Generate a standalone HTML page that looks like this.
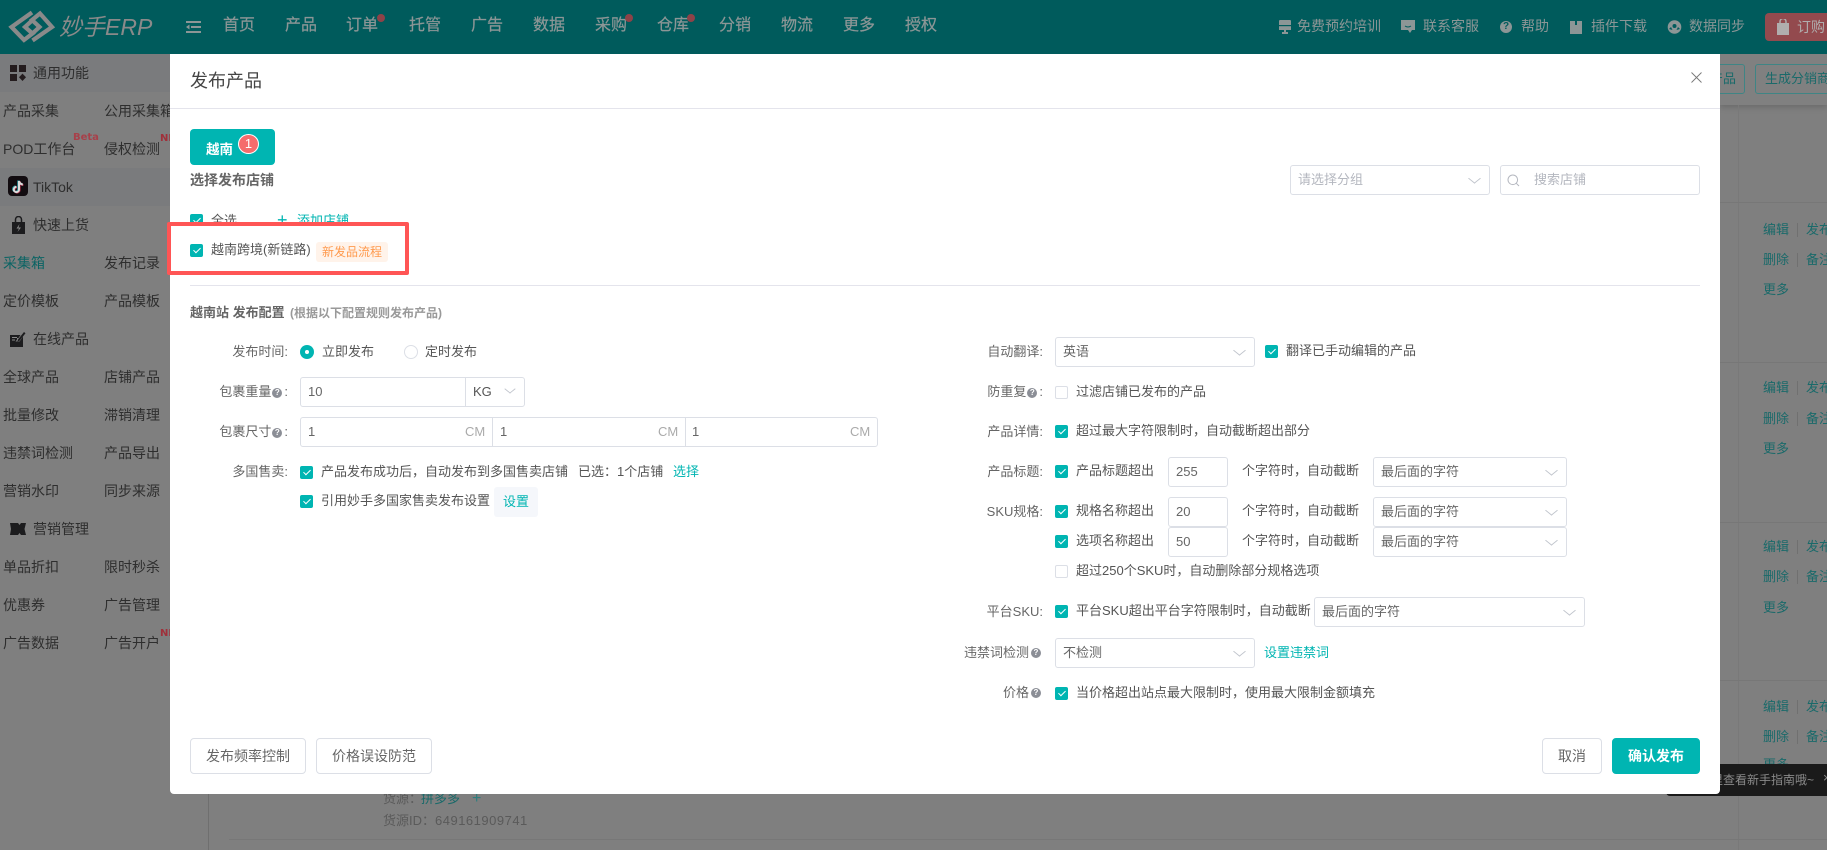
<!DOCTYPE html>
<html lang="zh"><head><meta charset="utf-8"><title>发布产品</title>
<style>
*{box-sizing:border-box}
html,body{margin:0;padding:0;width:1827px;height:850px;overflow:hidden;background:#7f7f7f;font-family:"Liberation Sans","Noto Sans CJK SC",sans-serif;font-size:13px;color:#606266}
div,span.a{position:absolute}
.t{height:20px;line-height:20px;white-space:nowrap}
.top{position:absolute;left:0;top:0;width:1827px;height:54px;background:#005b5c}
.n{font-size:16px;color:#8c9696;top:16px;-webkit-text-stroke:.2px #8c9696}
.tr{font-size:14px;color:#8c9696;top:16px}
.s{font-size:14px;color:#2e2e2e}
.band{left:0;width:170px;height:38px;background:#7a7b7d}
.act{font-size:13px;color:#1a6a6a}
.m{left:170px;top:54px;width:1550px;height:740px;background:#fff;border-radius:0 0 4px 4px}
.hr{height:1px;background:#e4e4ec}
.l{color:#666;text-align:right;font-size:13px}
.x{color:#555;font-size:13px}
.cb{width:13px;height:13px;background:#00b5b2;border-radius:2px}
.cb:after{content:"";position:absolute;left:4.5px;top:2px;width:3px;height:6px;border:solid #fff;border-width:0 1px 1px 0;transform:rotate(45deg)}
.ck{width:13px;height:13px;background:#fff;border:1px solid #dcdfe6;border-radius:2px}
.in{border:1px solid #dcdfe6;border-radius:3px;background:#fff;height:30px;line-height:28px;padding-left:7px;color:#666;font-size:13px;white-space:nowrap}
.sel:after{content:"";position:absolute;right:10px;top:8px;width:8px;height:8px;border:solid #c0c4cc;border-width:0 1px 1px 0;transform:scaleY(.8) rotate(45deg)}
.g{color:#b4b7bf}
.btn{border:1px solid #dcdfe6;border-radius:4px;background:#fff;height:36px;line-height:34px;text-align:center;color:#666;font-size:14px}
.q{width:10px;height:10px;border-radius:50%;background:#8b8e96;color:#fff;font-size:8px;line-height:10px;text-align:center;font-weight:bold}
.il{display:inline-block;position:relative;vertical-align:1px;margin:0 2px 0 1px}
.link{color:#00b5b2}
.bd{font-family:"DejaVu Sans",sans-serif;font-weight:bold;font-size:10px;line-height:14px;height:14px;white-space:nowrap}
</style></head><body>

<!-- background -->
<div style="left:1720px;top:54px;width:107px;height:51px;background:#808080;box-shadow:0 2px 6px rgba(0,0,0,.18)"></div>
<div style="left:1700px;top:64px;width:45px;height:30px;border:1px solid #3f8585;border-radius:3px"></div>
<div class="t act" style="left:1710px;top:69px">产品</div>
<div style="left:1755px;top:64px;width:100px;height:30px;border:1px solid #3f8585;border-radius:3px"></div>
<div class="t act" style="left:1765px;top:69px">生成分销商品</div>
<div style="left:1738px;top:105px;width:1px;height:745px;background:#797979"></div>
<div style="left:208px;top:794px;width:1px;height:56px;background:#6f6f6f"></div>
<div style="left:1720px;top:202px;width:107px;height:1px;background:#777"></div>
<div style="left:1720px;top:362px;width:107px;height:1px;background:#777"></div>
<div style="left:1720px;top:522px;width:107px;height:1px;background:#777"></div>
<div style="left:1720px;top:680px;width:107px;height:1px;background:#777"></div>
<div style="left:229px;top:839px;width:1598px;height:1px;background:#777"></div>

<div class="t act" style="left:1763px;top:220px">编辑</div><div style="left:1797px;top:223px;width:1px;height:14px;background:#707070"></div><div class="t act" style="left:1806px;top:220px">发布</div>
<div class="t act" style="left:1763px;top:250px">删除</div><div style="left:1797px;top:253px;width:1px;height:14px;background:#707070"></div><div class="t act" style="left:1806px;top:250px">备注</div>
<div class="t act" style="left:1763px;top:280px">更多</div>
<div class="t act" style="left:1763px;top:378px">编辑</div><div style="left:1797px;top:381px;width:1px;height:14px;background:#707070"></div><div class="t act" style="left:1806px;top:378px">发布</div>
<div class="t act" style="left:1763px;top:409px">删除</div><div style="left:1797px;top:412px;width:1px;height:14px;background:#707070"></div><div class="t act" style="left:1806px;top:409px">备注</div>
<div class="t act" style="left:1763px;top:439px">更多</div>
<div class="t act" style="left:1763px;top:537px">编辑</div><div style="left:1797px;top:540px;width:1px;height:14px;background:#707070"></div><div class="t act" style="left:1806px;top:537px">发布</div>
<div class="t act" style="left:1763px;top:567px">删除</div><div style="left:1797px;top:570px;width:1px;height:14px;background:#707070"></div><div class="t act" style="left:1806px;top:567px">备注</div>
<div class="t act" style="left:1763px;top:598px">更多</div>
<div class="t act" style="left:1763px;top:697px">编辑</div><div style="left:1797px;top:700px;width:1px;height:14px;background:#707070"></div><div class="t act" style="left:1806px;top:697px">发布</div>
<div class="t act" style="left:1763px;top:727px">删除</div><div style="left:1797px;top:730px;width:1px;height:14px;background:#707070"></div><div class="t act" style="left:1806px;top:727px">备注</div>
<div class="t act" style="left:1763px;top:755px">更多</div>

<div style="left:1666px;top:764px;width:161px;height:32px;background:#1a1a1a;border-radius:4px 0 0 4px"></div>
<div class="t" style="left:1711px;top:770px;font-size:12px;color:#8a8a8a;white-space:nowrap">里查看新手指南哦~</div>
<div class="t" style="left:1823px;top:768px;font-size:13px;color:#8a8a8a">×</div>

<div class="t" style="left:383px;top:789px;color:#5a5a5a">货源：</div>
<div class="t" style="left:421px;top:789px;color:#1a6a6a">拼多多</div>
<div class="t" style="left:472px;top:789px;color:#2f7f7f;font-size:16px">+</div>
<div class="t" style="left:383px;top:811px;color:#5a5a5a">货源ID：<span style="letter-spacing:.5px">649161909741</span></div>

<!-- sidebar -->
<div class="band" style="top:54px"></div>
<div class="band" style="top:168px"></div>
<svg style="position:absolute;left:10px;top:65px" width="16" height="16" viewBox="0 0 16 16"><g fill="#241c1e"><rect width="7" height="7"/><rect x="9" width="7" height="7"/><rect y="9" width="7" height="7"/><path d="M12.5 8.6l3.5 3.700-3.500 3.700-3.500-3.700z"/></g></svg>
<div class="t s" style="left:33px;top:63px">通用功能</div>
<div class="t s" style="left:3px;top:101px">产品采集</div><div class="t s" style="left:104px;top:101px">公用采集箱</div>
<div class="t s" style="left:3px;top:139px">POD工作台</div><div class="t s" style="left:104px;top:139px">侵权检测</div>
<div class="bd" style="left:73px;top:131px;color:#a8404a">Beta</div>
<div class="bd" style="left:160px;top:132px;color:#a0303a">NE</div>
<svg style="position:absolute;left:8px;top:176px" width="20" height="20" viewBox="0 0 20 20"><rect width="20" height="20" rx="4" fill="#120c10"/><g fill="none" stroke-width="2"><path d="M10.200 4.500v8.500a2.600 2.600 0 1 1-2.600-2.600M10.200 4.500c.4 2 1.600 3.200 3.800 3.500" stroke="#2a8f98"/><path d="M11.600 5.500v8.500a2.600 2.600 0 1 1-2.600-2.600M11.600 5.500c.4 2 1.600 3.200 3.800 3.500" stroke="#b0304a"/><path d="M11 5v8.500a2.600 2.600 0 1 1-2.600-2.600M11 5c.4 2 1.600 3.200 3.800 3.500" stroke="#dcdcdc"/></g></svg>
<div class="t s" style="left:33px;top:177px">TikTok</div>
<svg style="position:absolute;left:11px;top:216px" width="15" height="18" viewBox="0 0 15 18"><path d="M1 6h13v12H1z" fill="#1c1c1e"/><path d="M4.500 6V3.500a3 3 0 0 1 6 0V6" fill="none" stroke="#1c1c1e" stroke-width="1.500"/><path d="M8.500 8L5.500 12.500h2.500L6.500 16l3.500-4.500H7.500z" fill="#8a8a8a"/></svg>
<div class="t s" style="left:33px;top:215px">快速上货</div>
<div class="t s" style="left:3px;top:253px;color:#0c6464">采集箱</div><div class="t s" style="left:104px;top:253px">发布记录</div>
<div class="t s" style="left:3px;top:291px">定价模板</div><div class="t s" style="left:104px;top:291px">产品模板</div>
<svg style="position:absolute;left:10px;top:331px" width="16" height="16" viewBox="0 0 16 16"><path d="M0 4h10.500L8.500 7H7v1.500l-1.500 2 4 0 3.500-5V16H0z" fill="#1c1c1e"/><path d="M2 6.500h5M2 9h3" stroke="#8a8a8a"/><path d="M8 8.500l6-7.500 1.500 1.200-6 7.500-2 .8z" fill="#1c1c1e"/></svg>
<div class="t s" style="left:33px;top:329px">在线产品</div>
<div class="t s" style="left:3px;top:367px">全球产品</div><div class="t s" style="left:104px;top:367px">店铺产品</div>
<div class="t s" style="left:3px;top:405px">批量修改</div><div class="t s" style="left:104px;top:405px">滞销清理</div>
<div class="t s" style="left:3px;top:443px">违禁词检测</div><div class="t s" style="left:104px;top:443px">产品导出</div>
<div class="t s" style="left:3px;top:481px">营销水印</div><div class="t s" style="left:104px;top:481px">同步来源</div>
<svg style="position:absolute;left:10px;top:523px" width="16" height="12" viewBox="0 0 16 12"><path d="M0 0h8l1.500 2L11 0h5l-1.500 6L16 12h-5L9.500 10 8 12H0l1-6z" fill="#1c1c1e"/></svg>
<div class="t s" style="left:33px;top:519px">营销管理</div>
<div class="t s" style="left:3px;top:557px">单品折扣</div><div class="t s" style="left:104px;top:557px">限时秒杀</div>
<div class="t s" style="left:3px;top:595px">优惠券</div><div class="t s" style="left:104px;top:595px">广告管理</div>
<div class="t s" style="left:3px;top:633px">广告数据</div><div class="t s" style="left:104px;top:633px">广告开户</div>
<div class="bd" style="left:160px;top:627px;color:#a0303a">NE</div>

<!-- top bar -->
<div class="top"></div>
<svg style="position:absolute;left:8px;top:9px" width="48" height="36" viewBox="8 9 48 36"><g fill="none" stroke="#8a8a8a" stroke-width="4.200"><path d="M32 12.500L11.500 27 24 40 32.500 33.500 25 27 31 21.500"/><path d="M32.500 40.500L52 27 40 13.500 32 20 39.500 27 33.500 32.500"/></g></svg>
<div class="t" style="left:59px;top:13px;height:28px;line-height:28px;font-size:23px;font-style:italic;color:#8a8a8a">妙手ERP</div>
<svg style="position:absolute;left:185px;top:21px" width="17" height="12" viewBox="0 0 17 12"><path d="M1 1h15M6 6h10M1 11h15" stroke="#8c9696" stroke-width="2"/><path d="M1 6l3.500-2.500v5z" fill="#8c9696"/></svg>
<div class="t n" style="left:223px">首页</div>
<div class="t n" style="left:285px">产品</div>
<div class="t n" style="left:346px">订单</div>
<div class="t n" style="left:409px">托管</div>
<div class="t n" style="left:471px">广告</div>
<div class="t n" style="left:533px">数据</div>
<div class="t n" style="left:595px">采购</div>
<div class="t n" style="left:657px">仓库</div>
<div class="t n" style="left:719px">分销</div>
<div class="t n" style="left:781px">物流</div>
<div class="t n" style="left:843px">更多</div>
<div class="t n" style="left:905px">授权</div>
<div style="left:377px;top:14px;width:8px;height:8px;border-radius:50%;background:#8e4248"></div>
<div style="left:625px;top:14px;width:8px;height:8px;border-radius:50%;background:#8e4248"></div>
<div style="left:687px;top:14px;width:8px;height:8px;border-radius:50%;background:#8e4248"></div>

<svg style="position:absolute;left:1279px;top:20px" width="12" height="14" viewBox="0 0 12 14"><path d="M1 0h10a1 1 0 0 1 1 1v9H7v2h2v2H3v-2h2v-2H0V1a1 1 0 0 1 1-1z" fill="#8c9696"/><rect x="0" y="5" width="12" height="1.200" fill="#005b5c"/></svg>
<div class="t tr" style="left:1297px">免费预约培训</div>
<svg style="position:absolute;left:1401px;top:20px" width="15" height="14" viewBox="0 0 15 14"><path d="M0 0h14v10h-3l-2 3-2-3H0z" fill="#8c9696"/><path d="M4 6q3 2 6 0" stroke="#005b5c" fill="none"/></svg>
<div class="t tr" style="left:1423px">联系客服</div>
<div class="t" style="left:1500px;top:21px;width:12px;height:12px;border-radius:50%;background:#8c9696;color:#005b5c;font-size:10px;line-height:12px;font-weight:bold;text-align:center">?</div>
<div class="t tr" style="left:1521px">帮助</div>
<svg style="position:absolute;left:1570px;top:21px" width="12" height="13" viewBox="0 0 12 13"><path d="M0 0h5v4h2V0h5v13H0z" fill="#8c9696"/></svg>
<div class="t tr" style="left:1591px">插件下载</div>
<svg style="position:absolute;left:1667px;top:20px" width="15" height="14" viewBox="0 0 15 14"><circle cx="7.500" cy="7" r="6.800" fill="#8c9696"/><circle cx="7.500" cy="6" r="2" fill="#005b5c"/><path d="M2 9l2-2 1.500 3zM13 9l-2-2-1.500 3z" fill="#005b5c"/></svg>
<div class="t tr" style="left:1689px">数据同步</div>
<div style="left:1765px;top:13px;width:70px;height:28px;background:#934a4e;border-radius:4px"></div>
<svg style="position:absolute;left:1777px;top:19px" width="12" height="16" viewBox="0 0 12 16"><path d="M0 4h12v12H0z" fill="#b0aeae"/><path d="M3 5V2.500a3 3 0 0 1 6 0V5" fill="none" stroke="#b0aeae" stroke-width="1.500"/></svg>
<div class="t" style="left:1797px;top:17px;font-size:14px;color:#b0aeae">订购</div>

<!-- modal -->
<div class="m"></div>
<div class="t" style="left:190px;top:71px;font-size:18px;color:#444">发布产品</div>
<svg style="position:absolute;left:1691px;top:72px" width="11" height="11" viewBox="0 0 11 11"><path d="M.5.500l10 10M10.500.500l-10 10" stroke="#777" stroke-width=".9"/></svg>
<div class="hr" style="left:170px;top:108px;width:1550px"></div>

<div style="left:190px;top:129px;width:85px;height:36px;background:#00b5b2;border-radius:4px"></div>
<div class="t" style="left:206px;top:140px;color:#fff;font-weight:bold;font-size:13.500px">越南</div>
<div style="left:238px;top:134px;width:21px;height:20px;border-radius:50%;background:#f56c6c;border:1px solid #fff;color:#fff;text-align:center;line-height:18px;font-size:13px">1</div>
<div class="t" style="left:190px;top:170px;font-weight:bold;color:#666;font-size:14px">选择发布店铺</div>

<div class="in sel g" style="left:1290px;top:165px;width:200px">请选择分组</div>
<div class="in g" style="left:1500px;top:165px;width:200px;padding-left:33px">搜索店铺</div>
<svg style="position:absolute;left:1507px;top:174px" width="13" height="13" viewBox="0 0 13 13"><circle cx="5.800" cy="5.800" r="4.800" fill="none" stroke="#b4b7bf"/><path d="M9.300 9.300l2.700 2.700" stroke="#b4b7bf"/></svg>

<div class="cb" style="left:190px;top:214px"></div>
<div class="t x" style="left:211px;top:211px;font-size:13px">全选</div>
<div class="t link" style="left:277px;top:210px;font-size:18px;font-weight:300">+</div>
<div class="t link" style="left:297px;top:211px;font-size:13px">添加店铺</div>

<div style="left:167px;top:222px;width:242px;height:53px;border:4px solid #ff5555;border-radius:2px;background:#fff"></div>
<div class="cb" style="left:190px;top:244px"></div>
<div class="t x" style="left:211px;top:240px">越南跨境(新链路)</div>
<div style="left:316px;top:242px;width:72px;height:20px;background:#fff3ea;border-radius:3px;color:#ff9a4d;font-size:12px;line-height:20px;text-align:center">新发品流程</div>

<div class="hr" style="left:190px;top:285px;width:1510px"></div>
<div class="t" style="left:190px;top:303px;font-weight:bold;color:#666;font-size:13px">越南站 发布配置</div>
<div class="t" style="left:290px;top:303px;font-weight:bold;color:#999;font-size:12px">(根据以下配置规则发布产品)</div>

<!-- left form -->
<div class="t l" style="left:188px;top:342px;width:100px">发布时间:</div>
<div style="left:300px;top:345px;width:14px;height:14px;border-radius:50%;background:#00b5b2"></div>
<div style="left:305px;top:350px;width:4px;height:4px;border-radius:50%;background:#fff"></div>
<div class="t x" style="left:322px;top:342px">立即发布</div>
<div style="left:404px;top:345px;width:14px;height:14px;border-radius:50%;border:1px solid #dcdfe6"></div>
<div class="t x" style="left:425px;top:342px">定时发布</div>

<div class="t l" style="left:188px;top:382px;width:100px">包裹重量<span class="q il">?</span>:</div>
<div class="in" style="left:300px;top:377px;width:225px">10</div>
<div style="left:465px;top:378px;width:1px;height:28px;background:#dcdfe6"></div>
<div class="t x" style="left:473px;top:382px">KG</div>
<div style="left:506px;top:385px;width:8px;height:8px;border:solid #c0c4cc;border-width:0 1px 1px 0;transform:scaleY(.8) rotate(45deg)"></div>

<div class="t l" style="left:188px;top:422px;width:100px">包裹尺寸<span class="q il">?</span>:</div>
<div class="in" style="left:300px;top:417px;width:578px">1</div>
<div style="left:492px;top:418px;width:1px;height:28px;background:#dcdfe6"></div>
<div style="left:685px;top:418px;width:1px;height:28px;background:#dcdfe6"></div>
<div class="t" style="left:500px;top:422px;color:#666">1</div>
<div class="t" style="left:692px;top:422px;color:#666">1</div>
<div class="t" style="left:465px;top:422px;color:#aaa">CM</div>
<div class="t" style="left:658px;top:422px;color:#aaa">CM</div>
<div class="t" style="left:850px;top:422px;color:#aaa">CM</div>

<div class="t l" style="left:188px;top:462px;width:100px">多国售卖:</div>
<div class="cb" style="left:300px;top:466px"></div>
<div class="t x" style="left:321px;top:462px">产品发布成功后，自动发布到多国售卖店铺</div>
<div class="t x" style="left:578px;top:462px">已选：1个店铺</div>
<div class="t link" style="left:673px;top:462px">选择</div>
<div class="cb" style="left:300px;top:495px"></div>
<div class="t x" style="left:321px;top:491px">引用妙手多国家售卖发布设置</div>
<div style="left:494px;top:487px;width:44px;height:30px;background:#f5f7fb;border-radius:3px"></div>
<div class="t link" style="left:503px;top:492px">设置</div>

<!-- right form -->
<div class="t l" style="left:943px;top:342px;width:100px">自动翻译:</div>
<div class="in sel" style="left:1055px;top:337px;width:200px">英语</div>
<div class="cb" style="left:1265px;top:345px"></div>
<div class="t x" style="left:1286px;top:341px">翻译已手动编辑的产品</div>

<div class="t l" style="left:943px;top:382px;width:100px">防重复<span class="q il">?</span>:</div>
<div class="ck" style="left:1055px;top:386px"></div>
<div class="t x" style="left:1076px;top:382px">过滤店铺已发布的产品</div>

<div class="t l" style="left:943px;top:422px;width:100px">产品详情:</div>
<div class="cb" style="left:1055px;top:425px"></div>
<div class="t x" style="left:1076px;top:421px">超过最大字符限制时，自动截断超出部分</div>

<div class="t l" style="left:943px;top:462px;width:100px">产品标题:</div>
<div class="cb" style="left:1055px;top:465px"></div>
<div class="t x" style="left:1076px;top:461px">产品标题超出</div>
<div class="in" style="left:1168px;top:457px;width:60px">255</div>
<div class="t x" style="left:1242px;top:461px">个字符时，自动截断</div>
<div class="in sel" style="left:1373px;top:457px;width:194px">最后面的字符</div>

<div class="t l" style="left:943px;top:502px;width:100px">SKU规格:</div>
<div class="cb" style="left:1055px;top:505px"></div>
<div class="t x" style="left:1076px;top:501px">规格名称超出</div>
<div class="in" style="left:1168px;top:497px;width:60px">20</div>
<div class="t x" style="left:1242px;top:501px">个字符时，自动截断</div>
<div class="in sel" style="left:1373px;top:497px;width:194px">最后面的字符</div>

<div class="cb" style="left:1055px;top:535px"></div>
<div class="t x" style="left:1076px;top:531px">选项名称超出</div>
<div class="in" style="left:1168px;top:527px;width:60px">50</div>
<div class="t x" style="left:1242px;top:531px">个字符时，自动截断</div>
<div class="in sel" style="left:1373px;top:527px;width:194px">最后面的字符</div>

<div class="ck" style="left:1055px;top:565px"></div>
<div class="t x" style="left:1076px;top:561px">超过250个SKU时，自动删除部分规格选项</div>

<div class="t l" style="left:943px;top:602px;width:100px">平台SKU:</div>
<div class="cb" style="left:1055px;top:605px"></div>
<div class="t x" style="left:1076px;top:601px">平台SKU超出平台字符限制时，自动截断</div>
<div class="in sel" style="left:1314px;top:597px;width:271px">最后面的字符</div>

<div class="t l" style="left:929px;top:643px;width:100px">违禁词检测</div><div class="q" style="left:1031px;top:648px">?</div>
<div class="in sel" style="left:1055px;top:638px;width:200px">不检测</div>
<div class="t link" style="left:1264px;top:643px">设置违禁词</div>

<div class="t l" style="left:929px;top:683px;width:100px">价格</div><div class="q" style="left:1031px;top:688px">?</div>
<div class="cb" style="left:1055px;top:687px"></div>
<div class="t x" style="left:1076px;top:683px">当价格超出站点最大限制时，使用最大限制金额填充</div>

<div class="btn" style="left:190px;top:738px;width:116px">发布频率控制</div>
<div class="btn" style="left:316px;top:738px;width:116px">价格误设防范</div>
<div class="btn" style="left:1542px;top:738px;width:60px">取消</div>
<div class="btn" style="left:1612px;top:738px;width:88px;background:#00b5b2;border-color:#00b5b2;color:#fff;font-weight:bold">确认发布</div>

</body></html>
